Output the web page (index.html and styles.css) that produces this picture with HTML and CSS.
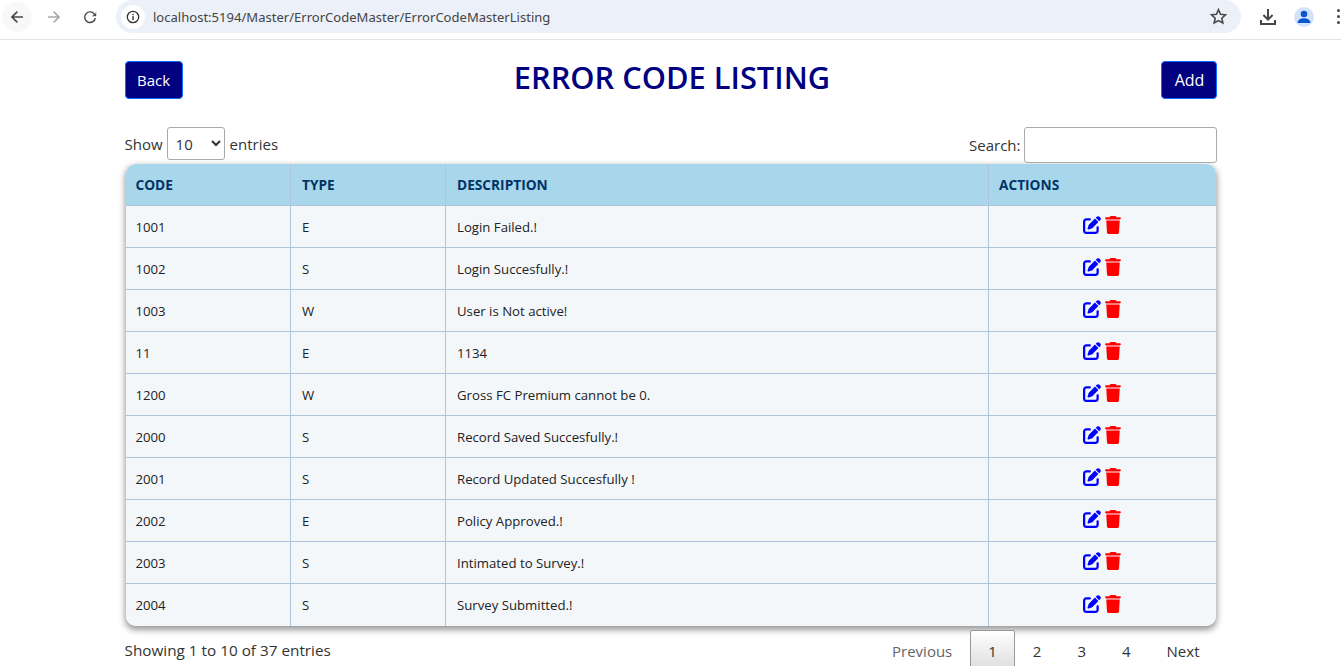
FILE: index.html
```html
<!DOCTYPE html>
<html lang="en">
<head>
  <meta charset="UTF-8" />
  <title>Error Code Listing</title>
  <link rel="stylesheet" href="styles.css">
</head>
<body>

<svg class="defs" width="0" height="0">
  <symbol id="icon-edit" viewBox="0 0 512 512"><path d="M471.6 21.7c-21.9-21.9-57.3-21.9-79.2 0L362.3 51.7l97.9 97.9 30.1-30.1c21.9-21.9 21.9-57.3 0-79.2L471.6 21.7zm-299.2 220c-6.1 6.1-10.8 13.6-13.5 21.9l-29.6 88.8c-2.9 8.6-.6 18.1 5.8 24.6s15.9 8.7 24.6 5.8l88.8-29.6c8.2-2.7 15.7-7.4 21.9-13.5L437.7 172.3 339.7 74.3 172.4 241.7zM96 64C43 64 0 107 0 160V416c0 53 43 96 96 96H352c53 0 96-43 96-96V320c0-17.7-14.3-32-32-32s-32 14.3-32 32v96c0 17.7-14.3 32-32 32H96c-17.7 0-32-14.3-32-32V160c0-17.7 14.3-32 32-32h96c17.7 0 32-14.3 32-32s-14.3-32-32-32H96z"/></symbol>
  <symbol id="icon-trash" viewBox="0 0 448 512"><path d="M135.2 17.7L128 32H32C14.3 32 0 46.3 0 64S14.3 96 32 96H416c17.7 0 32-14.3 32-32s-14.3-32-32-32H320l-7.2-14.3C307.4 6.8 296.3 0 284.2 0H163.8c-12.1 0-23.2 6.8-28.6 17.7zM416 128H32L53.2 467c1.6 25.3 22.6 45 47.9 45H346.9c25.3 0 46.3-19.7 47.9-45L416 128z"/></symbol>
</svg>

<div class="toolbar">
  <span class="nav-btn nav-back">
    <svg viewBox="0 0 16 16" width="16" height="16"><path d="M14 7.2H4.9l4-4L7.8 2 1.8 8l6 6 1.1-1.2-4-4H14z" fill="#474747"/></svg>
  </span>
  <span class="nav-btn">
    <svg viewBox="0 0 16 16" width="16" height="16"><path d="M2 7.2h9.1l-4-4L8.200 2l6 6-6 6-1.100-1.200 4-4H2z" fill="#a9a9a9"/></svg>
  </span>
  <span class="nav-btn">
    <svg viewBox="0 0 16 16" width="16" height="16"><path d="M13.200 5.200A6 6 0 1 0 14 9h-1.500a4.600 4.600 0 1 1-.5-3.100L9.500 7.200H14.200V2.300z" fill="#474747"/></svg>
  </span>
  <div class="omnibox">
    <span class="site-info">
      <svg viewBox="0 0 16 16" width="14" height="14"><circle cx="8" cy="8" r="6.500" fill="none" stroke="#333" stroke-width="1.500"/><rect x="7.200" y="7" width="1.600" height="4.600" fill="#333"/><rect x="7.200" y="4.300" width="1.600" height="1.600" fill="#333"/></svg>
    </span>
    <span class="url">localhost:5194/Master/ErrorCodeMaster/ErrorCodeMasterListing</span>
    <svg class="star" viewBox="0 0 24 24" width="19" height="19"><path d="M12 3.500l2.600 5.700 6.200.7-4.600 4.200 1.300 6.100L12 17.200l-5.500 3 1.300-6.100-4.600-4.200 6.200-.7z" fill="none" stroke="#474747" stroke-width="2"/></svg>
  </div>
  <svg class="download" viewBox="0 0 18 18" width="18" height="18"><path d="M8 1h2v8.200l2.900-2.900 1.400 1.400L9 13 3.700 7.700l1.400-1.400L8 9.200zM1 12h2v3h12v-3h2v5H1z" fill="#474747"/></svg>
  <span class="avatar">
    <svg viewBox="0 0 20 20" width="20" height="20"><circle cx="10" cy="7" r="3.300" fill="#0b57d0"/><path d="M3.500 16c0-3 3-4.800 6.500-4.800s6.500 1.800 6.500 4.800z" fill="#0b57d0"/></svg>
  </span>
  <span class="menu-dots"><i></i><i></i><i></i></span>
</div>

<div class="container">
  <div class="page-head">
    <button class="btn-navy btn-back">Back</button>
    <h1>ERROR CODE LISTING</h1>
    <button class="btn-navy btn-add">Add</button>
  </div>

  <div class="table-top">
    <label class="length">Show
      <select><option>10</option><option>25</option><option>50</option></select>
      entries</label>
    <label class="search">Search: <input type="search" /></label>
  </div>

  <div class="table-wrap">
    <table>
      <thead>
        <tr><th class="col-code">CODE</th><th class="col-type">TYPE</th><th class="col-desc">DESCRIPTION</th><th>ACTIONS</th></tr>
      </thead>
      <tbody>
        <tr><td>1001</td><td>E</td><td>Login Failed.!</td><td class="actions"><svg class="ico-edit"><use href="#icon-edit"/></svg><svg class="ico-trash"><use href="#icon-trash"/></svg></td></tr>
        <tr><td>1002</td><td>S</td><td>Login Succesfully.!</td><td class="actions"><svg class="ico-edit"><use href="#icon-edit"/></svg><svg class="ico-trash"><use href="#icon-trash"/></svg></td></tr>
        <tr><td>1003</td><td>W</td><td>User is Not active!</td><td class="actions"><svg class="ico-edit"><use href="#icon-edit"/></svg><svg class="ico-trash"><use href="#icon-trash"/></svg></td></tr>
        <tr><td>11</td><td>E</td><td>1134</td><td class="actions"><svg class="ico-edit"><use href="#icon-edit"/></svg><svg class="ico-trash"><use href="#icon-trash"/></svg></td></tr>
        <tr><td>1200</td><td>W</td><td>Gross FC Premium cannot be 0.</td><td class="actions"><svg class="ico-edit"><use href="#icon-edit"/></svg><svg class="ico-trash"><use href="#icon-trash"/></svg></td></tr>
        <tr><td>2000</td><td>S</td><td>Record Saved Succesfully.!</td><td class="actions"><svg class="ico-edit"><use href="#icon-edit"/></svg><svg class="ico-trash"><use href="#icon-trash"/></svg></td></tr>
        <tr><td>2001</td><td>S</td><td>Record Updated Succesfully !</td><td class="actions"><svg class="ico-edit"><use href="#icon-edit"/></svg><svg class="ico-trash"><use href="#icon-trash"/></svg></td></tr>
        <tr><td>2002</td><td>E</td><td>Policy Approved.!</td><td class="actions"><svg class="ico-edit"><use href="#icon-edit"/></svg><svg class="ico-trash"><use href="#icon-trash"/></svg></td></tr>
        <tr><td>2003</td><td>S</td><td>Intimated to Survey.!</td><td class="actions"><svg class="ico-edit"><use href="#icon-edit"/></svg><svg class="ico-trash"><use href="#icon-trash"/></svg></td></tr>
        <tr><td>2004</td><td>S</td><td>Survey Submitted.!</td><td class="actions"><svg class="ico-edit"><use href="#icon-edit"/></svg><svg class="ico-trash"><use href="#icon-trash"/></svg></td></tr>
      </tbody>
    </table>
  </div>

  <div class="table-foot">
    <div class="info">Showing 1 to 10 of 37 entries</div>
    <div class="pager">
      <span class="page disabled">Previous</span>
      <span class="page current">1</span>
      <span class="page">2</span>
      <span class="page">3</span>
      <span class="page">4</span>
      <span class="page">Next</span>
    </div>
  </div>
</div>

</body>
</html>
```

FILE: styles.css
```css
html, body { height: 100%; overflow: hidden; }
body { margin: 0; font-family: "Open Sans", "Noto Sans", sans-serif; font-size: 15px; color: #333; background: #fff; }
.defs { display: block; height: 0; }

.toolbar { display: flex; align-items: center; height: 33px; padding-bottom: 6px; border-bottom: 1px solid #e3e3e3; }
.nav-btn { display: flex; align-items: center; justify-content: center; width: 30px; height: 33px; margin-right: 6px; flex: none; }
.nav-btn:first-child { margin-left: 2px; margin-right: 7px; }
.nav-btn.nav-back { background: #f8f8f8; border-radius: 50%; width: 30px; height: 30px; }
.omnibox { display: flex; align-items: center; width: 1125px; height: 33px; margin-left: 5px; background: #ecf0f9; border-radius: 17px; flex: none; }
.site-info { display: flex; align-items: center; justify-content: center; width: 24px; height: 24px; margin-left: 5px; border-radius: 50%; background: #fff; }
.url { margin-left: 8px; font-family: "Noto Sans", sans-serif; font-size: 13.05px; color: #444; flex: 1; }
.star { margin-right: 13px; }
.download { margin-left: 18px; flex: none; }
.avatar { display: flex; align-items: center; justify-content: center; width: 20px; height: 20px; margin-left: 17px; background: #d3e3fd; border-radius: 50%; flex: none; }
.menu-dots { display: flex; flex-direction: column; gap: 3px; margin-left: 23px; }
.menu-dots i { display: block; width: 3px; height: 3px; background: #474747; border-radius: 50%; }

.container { width: 1092px; margin: 0 auto; }
.page-head { display: flex; justify-content: space-between; align-items: center; margin-top: 21px; height: 38px; }
.page-head h1 { margin: 0 0 7px; font-size: 30.8px; font-weight: 600; color: #000080; line-height: 36px; }
.btn-navy { height: 38px; padding: 0; font-family: inherit; font-size: 15px; color: #fff; background: #000080; border: 1px solid #0d6efd; border-radius: 4px; }
.btn-back { width: 58px; }
.btn-add { width: 56px; margin-right: -1px; font-size: 16px; }

.table-top { display: flex; justify-content: space-between; align-items: flex-start; margin-top: 28px; height: 37px; }
.length, .search { display: flex; align-items: center; gap: 4px; }
.length select { width: 58px; height: 33px; margin-right: 1px; padding: 0 4px; font-family: inherit; font-size: 15px; color: #333; background: #fff; border: 1px solid #aaa; border-radius: 3px; }
.search { gap: 3px; }
.search input { width: 193px; height: 36px; box-sizing: border-box; padding: 0 4px; border: 1px solid #aaa; border-radius: 3px; background: #fff; }

.table-wrap { margin: 0 1px; border-radius: 10px; box-shadow: 0 3px 6px 1px rgba(0,0,0,0.4); overflow: hidden; }
table { width: 100%; border-collapse: collapse; table-layout: fixed; }
th, td { box-sizing: border-box; height: 42px; padding: 0 10px; text-align: left; border-right: 1px solid #b0c4de; border-bottom: 1px solid #b0c4de; }
th { height: 41px; font-size: 13.7px; font-weight: 700; color: #003366; background: #a8d6ea; }
td { padding-top: 1px; font-size: 13.2px; color: #222; background: #f4f7fa; }
th:nth-child(2), th:nth-child(3), td:nth-child(2), td:nth-child(3) { padding-left: 11px; }
th:last-child, td:last-child { border-right: 0; }
tbody tr:last-child td { height: 43px; border-bottom: 0; }
.col-code { width: 165px; }
.col-type { width: 155px; }
.col-desc { width: 543px; }
td.actions { text-align: center; padding-top: 0; padding-bottom: 3px; }
.actions svg { display: inline-block; height: 18px; vertical-align: middle; }
.ico-edit { width: 18px; fill: #0000ff; margin-right: 4px; }
.ico-trash { width: 16px; fill: #ff0000; }

.table-foot { display: flex; justify-content: space-between; margin-top: 4px; }
.info { padding-top: 10px; font-size: 15.3px; }
.pager { display: flex; margin-right: -1px; }
.page { display: block; padding: 9px 17px; line-height: 22px; border: 1px solid transparent; border-radius: 2px 2px 0 0; }
.page.disabled { color: #666; }
.page.current { border-color: #979797; background: linear-gradient(to bottom, #fff, #dcdcdc); }
```
